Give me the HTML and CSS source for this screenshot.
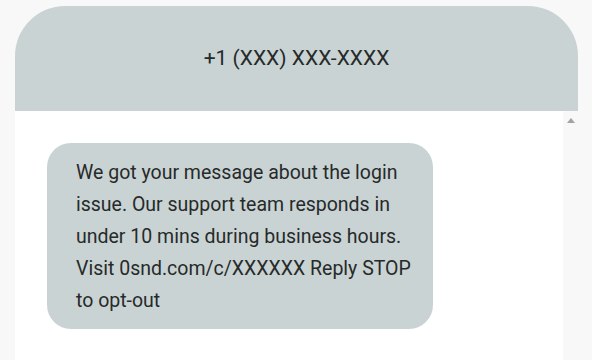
FILE: index.html
```html
<!DOCTYPE html>
<html>
<head>
<meta charset="utf-8">
<link rel="stylesheet" href="styles.css">
</head>
<body>
<div class="phone">
  <div class="header">+1 (XXX) XXX-XXXX</div>
  <div class="content">
    <div class="messages">
      <div class="bubble">We got your message about the login issue. Our support team responds in under 10 mins during business hours. Visit 0snd.com/c/XXXXXX Reply STOP to opt-out</div>
    </div>
    <div class="scrollbar"><span class="arrow"></span></div>
  </div>
</div>
</body>
</html>
```
FILE: styles.css
```css
html, body {
  margin: 0;
  padding: 0;
  height: 100%;
  overflow: hidden;
}
body {
  background: #f8f8f8;
  font-family: Roboto, "Liberation Sans", sans-serif;
  color: #262a2a;
}
.phone {
  margin: 6px 0 0 15px;
  width: 563px;
  height: 360px;
  display: flex;
  flex-direction: column;
}
.header {
  height: 105px;
  flex: none;
  background: #cad3d3;
  border-radius: 50px 50px 0 0;
  display: flex;
  align-items: center;
  justify-content: center;
  font-size: 21px;
  padding-bottom: 1px;
  box-sizing: border-box;
}
.content {
  flex: 1;
  background: #fff;
  display: flex;
}
.messages {
  flex: 1;
  padding: 32px 0 0 32px;
}
.bubble {
  width: 386px;
  box-sizing: border-box;
  background: #cad3d3;
  border-radius: 24px;
  padding: 14px 17px 12px 29px;
  font-size: 19.5px;
  line-height: 32px;
}
.scrollbar {
  width: 15px;
  background: #f8f8f8;
  display: flex;
  justify-content: center;
  padding-top: 7px;
  box-sizing: border-box;
}
.arrow {
  width: 0;
  height: 0;
  border-left: 4px solid transparent;
  border-right: 4px solid transparent;
  border-bottom: 5px solid #a3a3a3;
}
```
